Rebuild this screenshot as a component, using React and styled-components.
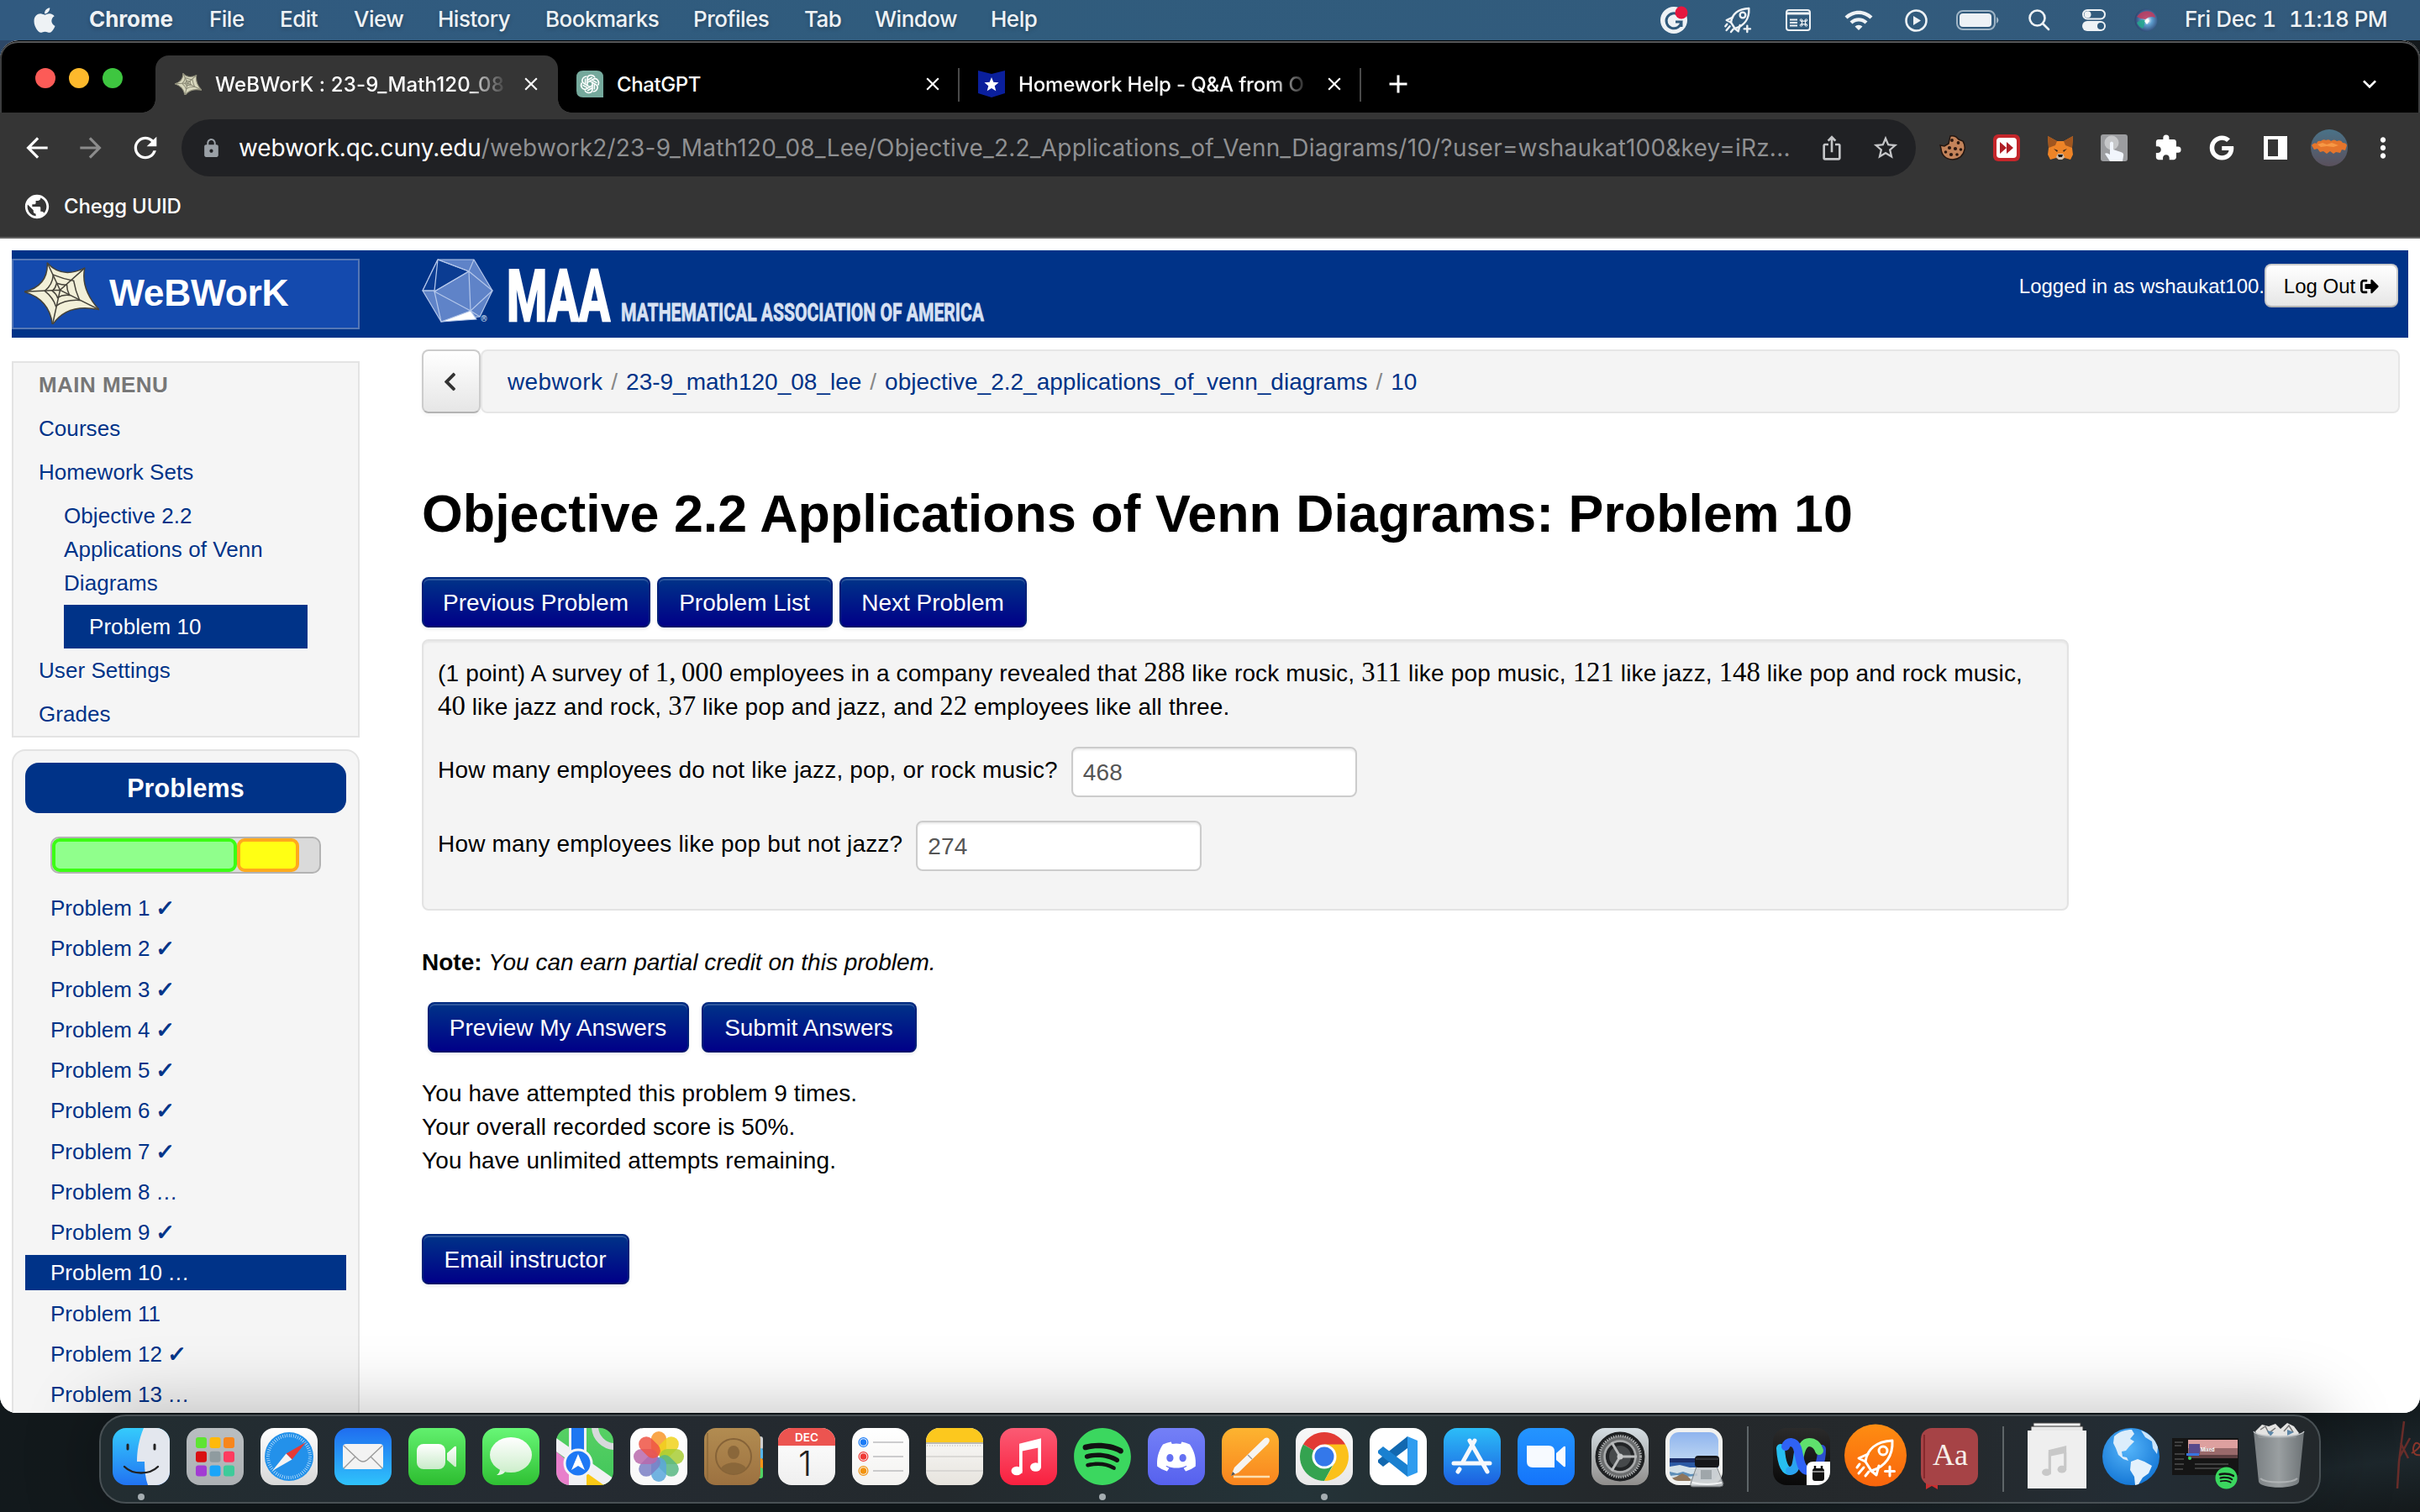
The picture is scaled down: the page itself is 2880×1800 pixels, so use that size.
import React from "react";
import styled, { createGlobalStyle } from "styled-components";
import { FaApple, FaSpotify, FaDiscord, FaGoogle, FaSignOutAlt, FaChevronLeft } from "react-icons/fa";
import {
  MdArrowBack,
  MdArrowForward,
  MdRefresh,
  MdClose,
  MdAdd,
  MdLock,
  MdIosShare,
  MdStarBorder,
  MdExtension,
  MdMoreVert,
  MdPublic,
  MdExpandMore,
  MdWifi
} from "react-icons/md";

const GlobalStyle = createGlobalStyle`
  * { box-sizing: border-box; }
  body { margin: 0; background: #14191c; }
`;

const ui = `Inter, "Noto Sans", sans-serif`;
const helv = `"Liberation Sans", Arial, sans-serif`;

/* ---------- desktop ---------- */

const Desktop = styled.div`
  width: 2880px;
  height: 1800px;
  overflow: hidden;
  display: flex;
  flex-direction: column;
  font-family: ${ui};
  background: linear-gradient(172deg, #2d4767 0, #2d4767 300px, #14191c 301px, #12191c 94%, #1d272c 97%, #14191b 100%);
`;

const MenuBar = styled.div`
  height: 48px;
  flex: none;
  display: flex;
  justify-content: space-between;
  padding: 0 40px 3px;
  background: linear-gradient(90deg, #315a80, #305c7d 40%, #335a7c);
  color: #eef2f5;
  font-size: 26px;
  text-shadow: 0 2px 5px rgba(0, 0, 0, 0.25);
`;

const MenuGroup = styled.div`
  display: flex;
  align-items: center;
`;

const MenuItem = styled.span`
  width: ${p => p.$w}px;
  flex: none;
  white-space: pre;
  font-weight: ${p => (p.$bold ? 700 : 500)};
  letter-spacing: ${p => (p.$ls === undefined ? -0.5 : p.$ls)}px;
  font-variant-numeric: ${p => (p.$tabular ? "tabular-nums" : "normal")};
`;

const MenuIcon = styled.span`
  width: ${p => p.$w}px;
  height: 40px;
  flex: none;
  display: flex;
  align-items: center;
  margin-top: 3px;
  svg { display: block; overflow: visible; }
`;

const AppleMenu = styled(MenuIcon)`
  svg { margin-left: -4px; }
`;

const BrowserWindow = styled.div`
  height: 1634px;
  flex: none;
  display: flex;
  flex-direction: column;
  border-radius: 22px 22px 20px 20px;
  overflow: hidden;
  background: #fff;
`;

/* ---------- chrome ---------- */

const TabStrip = styled.div`
  height: 86px;
  flex: none;
  display: flex;
  align-items: flex-end;
  background: #000;
  border-radius: 22px 22px 0 0;
  border-top: 1px solid #000;
  box-shadow: inset 0 2px 0 #56585a, inset 2px 0 0 #3c3d3e, inset -2px 0 0 #3c3d3e;
  padding: 0 2px;
  color: #fff;
`;

const Lights = styled.div`
  width: 183px;
  height: 68px;
  display: flex;
  gap: 16px;
  padding: 15px 0 0 40px;
`;

const Light = styled.i`
  width: 24px;
  height: 24px;
  border-radius: 50%;
  background: ${p => p.$c};
`;

const Tab = styled.div`
  position: relative;
  width: ${p => p.$w}px;
  height: 68px;
  display: flex;
  align-items: center;
  font-size: 24px;
  font-weight: 500;
  padding-left: ${p => p.$pl}px;
  border-radius: 16px 16px 0 0;
  background: ${p => (p.$active ? "#353535" : "transparent")};

  &::before,
  &::after {
    content: "";
    display: ${p => (p.$active ? "block" : "none")};
    position: absolute;
    bottom: 0;
    width: 16px;
    height: 16px;
  }
  &::before {
    left: -16px;
    background: radial-gradient(circle at 0 0, transparent 15.5px, #353535 16px);
  }
  &::after {
    right: -16px;
    background: radial-gradient(circle at 100% 0, transparent 15.5px, #353535 16px);
  }
  svg { flex: none; display: block; }
`;

const TabTitle = styled.span`
  width: 363px;
  margin-left: 16px;
  white-space: nowrap;
  letter-spacing: ${p => (p.$ls === undefined ? -0.4 : p.$ls)}px;
  mask-image: ${p => (p.$fade ? "linear-gradient(90deg, #000 82%, transparent 96%)" : "none")};
`;

const TabRule = styled.i`
  width: 2px;
  height: 40px;
  margin-bottom: 13px;
  background: #4a4a4a;
`;

const StripIcon = styled.span`
  height: 68px;
  display: flex;
  align-items: center;
  margin-left: ${p => p.$ml}px;
`;

const Toolbar = styled.div`
  height: 84px;
  flex: none;
  display: flex;
  align-items: center;
  padding-left: 25px;
  background: #353535;
  color: #fff;
`;

const NavIcon = styled.span`
  width: 64px;
  flex: none;
  display: flex;
  color: ${p => (p.$dim ? "#8b8b8b" : "#fff")};
`;

const Omnibox = styled.div`
  width: 2064px;
  height: 68px;
  flex: none;
  margin-left: -1px;
  border-radius: 34px;
  background: #202124;
  display: flex;
  align-items: center;
  padding: 0 20px 0 23px;
  color: #9aa0a6;
  svg { flex: none; }
`;

const Url = styled.div`
  flex: 1;
  margin-left: 20px;
  font-size: 28px;
  letter-spacing: 0.2px;
  white-space: nowrap;
  color: #8f9092;
  b {
    color: #fff;
    font-weight: 400;
    letter-spacing: -0.15px;
  }
`;

const OmniIcon = styled.span`
  width: 64px;
  display: flex;
  justify-content: center;
  color: #c4c5c7;
  &:last-child { margin-right: -16px; }
`;

const Extensions = styled.div`
  display: flex;
  margin-left: 12px;
`;

const ExtSlot = styled.span`
  width: 64px;
  height: 44px;
  display: flex;
  align-items: center;
  justify-content: center;
`;

const BookmarkBar = styled.div`
  height: 66px;
  flex: none;
  display: flex;
  align-items: center;
  gap: 15px;
  padding: 0 0 9px 27px;
  background: #353535;
  border-bottom: 2px solid #626262;
  color: #fff;
  font-size: 24px;
  font-weight: 500;
  letter-spacing: -0.2px;
`;

/* ---------- webwork page ---------- */

const Page = styled.div`
  flex: 1;
  min-height: 0;
  overflow: hidden;
  padding: 14px 14px 0;
  background: #fff;
  font-family: ${helv};
  font-size: 28px;
  line-height: 40px;
  color: #000;
`;

const Masthead = styled.div`
  height: 104px;
  display: flex;
  align-items: flex-start;
  background: #038;
  padding: 10px 12px 0 0;
`;

const Brand = styled.div`
  width: 414px;
  height: 84px;
  display: flex;
  align-items: center;
  gap: 12px;
  padding: 0 0 2px 13px;
  border: 2px solid #5577b5;
  background: #144aae;
  color: #fff;
  font-size: 44.5px;
  font-weight: 700;
  letter-spacing: -0.4px;
`;

const MaaLogo = styled.svg`
  width: 690px;
  height: 84px;
  margin-left: 74px;
  display: block;
  overflow: visible;
`;

const Login = styled.div`
  margin: 6px 0 0 auto;
  display: flex;
  align-items: center;
  color: #fff;
  font-size: 24px;
`;

const UserName = styled.span`
  padding-top: 2px;
`;

const LogOut = styled.span`
  width: 159px;
  height: 52px;
  display: flex;
  align-items: center;
  justify-content: center;
  gap: 6px;
  padding-top: 1px;
  border: 2px solid #bbb;
  border-color: #ccc #ccc #b3b3b3;
  border-radius: 8px;
  background: linear-gradient(#fff, #e6e6e6);
  color: #000;
`;

const Columns = styled.div`
  display: flex;
  align-items: flex-start;
`;

const Sidebar = styled.div`
  width: 414px;
  flex: none;
  margin: 28px 74px 0 0;
  font-size: 26px;
  letter-spacing: 0.08px;
  color: #038;
`;

const MenuPanel = styled.div`
  border: 2px solid #e3e3e3;
  background: #f5f5f5;
`;

const SideLink = styled.div`
  padding: 6px 30px;
  margin-left: ${p => (p.$sub ? 60 : 0)}px;
  margin-right: ${p => (p.$sub ? 60 : 0)}px;
  padding-left: ${p => (p.$sub && !p.$on ? 0 : 30)}px;
  padding-right: 0;
  color: ${p => (p.$on ? "#fff" : p.$head ? "#777" : "#038")};
  background: ${p => (p.$on ? "#038" : "none")};
  font-weight: ${p => (p.$head ? 700 : 400)};
  letter-spacing: ${p => (p.$head ? 0.45 : 0.06)}px;
  text-shadow: ${p => (p.$on ? "none" : "0 2px 0 rgba(255, 255, 255, 0.6)")};
`;

const ProblemPanel = styled.div`
  height: 900px;
  margin-top: 14px;
  padding: 14px;
  border: 2px solid #e3e3e3;
  border-radius: 16px;
  background: #f5f5f5;
`;

const PanelHead = styled.div`
  height: 60px;
  line-height: 61px;
  border-radius: 16px;
  background: #038;
  color: #fff;
  text-align: center;
  font-size: 30.5px;
  font-weight: 700;
`;

const Progress = styled.div`
  width: 322px;
  height: 44px;
  margin: 28px 0 20px 30px;
  display: flex;
  border: 2px solid #b3b3b3;
  border-radius: 10px;
  background: #dadada;
`;

const Segment = styled.i`
  width: ${p => p.$w}px;
  border: 4px solid ${p => p.$edge};
  border-radius: 9px;
  background: ${p => p.$fill};
`;

const ProblemLink = styled.div`
  height: 42px;
  line-height: 42px;
  margin-bottom: 6.25px;
  padding-left: 30px;
  letter-spacing: 0;
  color: ${p => (p.$on ? "#fff" : "#038")};
  background: ${p => (p.$on ? "#038" : "none")};
  display: flex;
  gap: 7px;
`;

const Mark = styled.span`
  display: inline-block;
  transform: skewX(-4deg);
  -webkit-text-stroke: ${p => (p.$check ? 1 : 0)}px currentColor;
`;

const Main = styled.div`
  flex: 1;
  padding: 14px 10px 0 0;
`;

const Crumbs = styled.div`
  height: 76px;
  display: flex;
`;

const BackButton = styled.span`
  width: 70px;
  display: flex;
  align-items: center;
  justify-content: center;
  padding-right: 3px;
  border: 2px solid #ccc;
  border-bottom-color: #b3b3b3;
  border-radius: 8px;
  background: linear-gradient(#fff, #e6e6e6);
  box-shadow: 0 2px 4px rgba(0, 0, 0, 0.05);
  color: #333;
`;

const CrumbTrail = styled.div`
  flex: 1;
  display: flex;
  align-items: center;
  gap: 10px;
  padding: 1px 0 0 30px;
  border: 2px solid #e6e6e6;
  border-radius: 8px;
  background: #f4f4f4;
  color: #038;
  letter-spacing: 0;
  i { color: #888; font-style: normal; }
  span:first-child { letter-spacing: 0.4px; }
`;

const Title = styled.h1`
  margin: 79px 0 36px;
  font-size: 62.75px;
  line-height: 80px;
  font-weight: 700;
`;

const ButtonRow = styled.div`
  display: flex;
  gap: ${p => p.$gap || 8}px;
  margin: ${p => p.$m || 0};
`;

const Button = styled.span`
  height: 60px;
  width: ${p => p.$w}px;
  display: flex;
  align-items: center;
  justify-content: center;
  padding: 1px 1px 0 0;
  border: 2px solid;
  border-color: #002a80 #002078 #00106a;
  border-radius: 8px;
  background: linear-gradient(#038, #008);
  box-shadow: inset 0 2px 0 rgba(255, 255, 255, 0.18), 0 2px 4px rgba(0, 0, 0, 0.08);
  color: #fff;
`;

const Well = styled.div`
  width: 1960px;
  height: 323px;
  margin-top: 14px;
  padding: 19px 18px;
  border: 2px solid #e3e3e3;
  border-radius: 8px;
  background: #f4f4f4;
  box-shadow: inset 0 2px 2px rgba(0, 0, 0, 0.05);
  white-space: nowrap;
`;

const Statement = styled.div`
  margin-left: -1px;
  letter-spacing: 0.16px;
`;

const Num = styled.span`
  font-family: "Liberation Serif", serif;
  font-size: 32.8px;
  line-height: 0;
  letter-spacing: 0;
`;

const Question = styled.div`
  height: 60px;
  margin: ${p => p.$mt}px 0 0 -1px;
  display: flex;
  gap: 16px;
  line-height: 55px;
  letter-spacing: 0.17px;
`;

const Answer = styled.div`
  width: 340px;
  height: 60px;
  line-height: 58px;
  padding-left: 12px;
  border: 2px solid #ccc;
  border-radius: 8px;
  background: #fff;
  box-shadow: inset 0 2px 2px rgba(0, 0, 0, 0.075);
  color: #555;
`;

const Para = styled.div`
  margin-top: ${p => p.$mt}px;
  letter-spacing: ${p => p.$ls || 0}px;
`;

/* ---------- dock ---------- */

const DockShelf = styled.div`
  height: 118px;
  flex: none;
  display: flex;
  align-items: flex-start;
  padding: 2px 0 0 118px;
`;

const Scribble = styled.svg`
  width: 36px;
  height: 90px;
  flex: none;
  margin: 6px 0 0 84px;
  opacity: 0.8;
`;

const Dock = styled.div`
  position: relative;
  width: 2644px;
  height: 106px;
  flex: none;
  padding: 14px 14px 0;
  display: flex;
  gap: 20px;
  border: 2px solid #485054;
  border-radius: 32px;
  background: linear-gradient(90deg, #222d31, #252b32 20%, #23292d 38%, #243338 54%, #24282b 68%, #25292c 82%, #232d35 92%, #23282b);
  box-shadow: 0 0 84px 6px rgba(0, 0, 0, 0.25);
`;

const DockSlot = styled.div`
  width: 68px;
  display: flex;
  flex-direction: column;
  align-items: center;
  svg { display: block; flex: none; overflow: visible; }
`;

const RunDot = styled.i`
  width: 8px;
  height: 8px;
  margin-top: 10px;
  border-radius: 50%;
  background: #a5adb1;
`;

const DockRule = styled.i`
  width: 2px;
  height: 78px;
  margin: -2px 9px 0;
  background: #5e6568;
`;

const Icon = ({ children }) => (
  <svg width="68" height="68" viewBox="0 0 68 68">{children}</svg>
);

const Grad = ({ id, a, b }) => (
  <linearGradient id={id} x1="0" y1="0" x2="0" y2="1">
    <stop offset="0" stopColor={a} />
    <stop offset="1" stopColor={b} />
  </linearGradient>
);

const Tile = ({ id, a, b, children }) => (
  <Icon>
    <defs>
      <Grad id={id} a={a} b={b} />
      <clipPath id={id + "Clip"}><rect width="68" height="68" rx="16" /></clipPath>
    </defs>
    <g clipPath={`url(#${id}Clip)`}>
      <rect width="68" height="68" fill={`url(#${id})`} />
      {children}
    </g>
  </Icon>
);

const Finder = () => (
  <Tile id="finder" a="#35cbfc" b="#2173f2">
    <path d="M37 0C31 14 29 28 29 40h9c0 10 1 20 4 28h26V0z" fill="#e3e7ee" />
    <path d="M18 20v5M50 20v5" stroke="#222" strokeWidth="3" strokeLinecap="round" />
    <path d="M14 46c10 10 30 10 40 0" stroke="#222" strokeWidth="2.4" fill="none" strokeLinecap="round" />
  </Tile>
);

const launchColors = ["#5ee432", "#ffb90a", "#f7861c", "#d90f12", "#8f9b9f", "#ff3b5f", "#a23bd3", "#1ba5f8", "#3ecb9a"];
const Launchpad = () => (
  <Tile id="launch" a="#b9bec1" b="#adb1b4">
    {launchColors.map((c, i) => (
      <rect key={c} x={11 + (i % 3) * 16.5} y={11 + Math.floor(i / 3) * 16.7} width="13" height="13" rx="3" fill={c} />
    ))}
  </Tile>
);

const Safari = () => (
  <Tile id="safari" a="#ffffff" b="#d8d8d8">
    <circle cx="34" cy="34" r="29" fill="#2391ea" />
    <circle cx="34" cy="34" r="25" fill="none" stroke="#cfe8fb" strokeWidth="4" strokeDasharray="0.7 1.9" />
    <path d="M54 17L37.500 37.500 30.500 30.500z" fill="#e53a35" />
    <path d="M14 51L30.500 30.500 37.500 37.500z" fill="#f4f4f4" />
  </Tile>
);

const Mail = () => (
  <Tile id="mail" a="#1f6df0" b="#2fc3fb">
    <rect x="10" y="19" width="48" height="30" rx="4" fill="#f3f3f3" />
    <path d="M11 21l18 17q5 4 10 0l18-17M11 48l14-14M57 48L43 34" stroke="#9a9a9a" strokeWidth="1.4" fill="none" />
  </Tile>
);

const FaceTime = () => (
  <Tile id="face" a="#62f06e" b="#2dbd30">
    <defs><Grad id="cam" a="#ffffff" b="#c9ebc9" /></defs>
    <rect x="10" y="19" width="34" height="30" rx="8" fill="url(#cam)" />
    <path d="M46 30l9-8q2-1 2 1v22q0 2-2 1l-9-8z" fill="url(#cam)" />
  </Tile>
);

const Messages = () => (
  <Tile id="msg" a="#68f777" b="#2fc033">
    <defs><Grad id="bubble" a="#ffffff" b="#cdeecb" /></defs>
    <path d="M21 48c0 4-1 6-4 8 6 0 9-2 11-5z" fill="#e4f5e4" />
    <ellipse cx="34" cy="32" rx="25" ry="21" fill="url(#bubble)" />
  </Tile>
);

const Maps = () => (
  <Tile id="maps" a="#57d064" b="#41c65a">
    <path d="M0 28l68 56H0z" fill="#e87fcb" />
    <path d="M30 44l40 30H30z" fill="#fbc916" />
    <path d="M0 12l68 48v16L0 28z" fill="#f1f1f4" />
    <path d="M15 0h21v68H15z" fill="#f1f1f4" />
    <path d="M18 0h15v36H18z" fill="#1d77f2" />
    <circle cx="70" cy="-2" r="24" fill="none" stroke="#d7d9dc" strokeWidth="8" />
    <circle cx="26" cy="42" r="16" fill="#1d78f5" stroke="#f4f4f6" strokeWidth="3" />
    <path d="M26 31l8 19-8-5-8 5z" fill="#fff" />
  </Tile>
);

const petals = ["#f8962a", "#f0d21c", "#a8cc35", "#58b782", "#5aa7dc", "#7a7fc4", "#b869ab", "#ee5444"];
const Photos = () => (
  <Tile id="photos" a="#ffffff" b="#f8f8f8">
    {petals.map((c, i) => (
      <rect key={c} x="25" y="4" width="18" height="29" rx="9" fill={c} opacity="0.85" transform={`rotate(${i * 45} 34 34)`} />
    ))}
  </Tile>
);

const Contacts = () => (
  <Icon>
    <rect x="58" y="10" width="12" height="16" rx="3" fill="#cfcfcf" />
    <rect x="58" y="24" width="12" height="14" rx="3" fill="#54b6f0" />
    <rect x="58" y="36" width="12" height="14" rx="3" fill="#fb9416" />
    <rect x="58" y="47" width="12" height="13" rx="3" fill="#4fd363" />
    <defs><Grad id="contacts" a="#b28c51" b="#9c7140" /></defs>
    <rect width="67" height="68" rx="14" fill="url(#contacts)" />
    <path d="M4 6v56" stroke="#8d6a3a" strokeWidth="1.5" />
    <circle cx="35" cy="34" r="21" fill="none" stroke="#866338" strokeWidth="2" />
    <ellipse cx="35" cy="29" rx="7" ry="8" fill="#8a673a" />
    <path d="M20 48c5-9 25-9 30 0-7 9-23 9-30 0z" fill="#8a673a" />
  </Icon>
);

const Calendar = () => (
  <Tile id="cal" a="#ffffff" b="#efefef">
    <path d="M0 0h68v21H0z" fill="#ec5450" />
    <text x="34" y="16" fill="#fff" fontSize="13.500" fontWeight="600" fontFamily={ui} textAnchor="middle">DEC</text>
    <text x="32" y="57" fill="#222" fontSize="41" fontWeight="300" fontFamily={ui} textAnchor="middle">1</text>
  </Tile>
);

const Reminders = () => (
  <Tile id="rem" a="#ffffff" b="#f3f2f0">
    {["#1a7bf6", "#ef3a36", "#f2930f"].map((c, i) => (
      <g key={c}>
        <circle cx="13.500" cy={17 + i * 17} r="5.400" fill="none" stroke={c} strokeWidth="1.2" />
        <circle cx="13.500" cy={17 + i * 17} r="3.800" fill={c} />
        <path d={`M25 ${17 + i * 17}h36`} stroke="#bdbdbf" strokeWidth="1.6" />
      </g>
    ))}
  </Tile>
);

const Notes = () => (
  <Tile id="notes" a="#fbfbfa" b="#e7e4de">
    <path d="M0 0h68v17H0z" fill="#fcc81e" />
    <path d="M0 18h68" stroke="#a9a69c" strokeWidth="1.4" />
    <path d="M1 21h66" stroke="#b5b2aa" strokeWidth="1.2" strokeDasharray="1.2 1.800" />
    <path d="M0 34h68M0 51h68" stroke="#d2d1ce" strokeWidth="1.4" />
  </Tile>
);

// beamed pair of eighth notes
const NoteShape = ({ fill }) => (
  <g fill={fill}>
    <path d="M23 19l26-8v40h-3.500V25L26.500 30v33H23z" transform="translate(0 3.500) scale(1 .8)" />
    <path d="M45.500 22h3.500v25h-3.500zM23 22h3.500v30H23z" />
    <ellipse cx="20" cy="51" rx="6.500" ry="5.200" />
    <ellipse cx="42.500" cy="46.500" rx="6.500" ry="5.200" />
  </g>
);

const Music = () => (
  <Tile id="music" a="#fb5b74" b="#f9203f">
    <NoteShape fill="#fff" />
  </Tile>
);

const Spotify = () => (
  <Icon>
    <circle cx="34" cy="34" r="32" fill="#121212" />
    <FaSpotify x="-1" y="-1" size={70} color="#3bd75f" />
  </Icon>
);

const Discord = () => (
  <Tile id="disc" a="#7480f7" b="#5661ee">
    <FaDiscord x="9" y="9" size={50} color="#fff" />
  </Tile>
);

const Pages = () => (
  <Tile id="pages" a="#fdb430" b="#f9841e">
    <path d="M11 57l4-10L49 14q4-4 7-1.500 2 2.500-1 6.500L20 53z" fill="#f6f4f1" />
    <path d="M11 57l2-5 3 3z" fill="#555" />
    <path d="M31 32l5 5" stroke="#9a9a9a" strokeWidth="1.4" />
    <path d="M14 58h43" stroke="#fde0b0" strokeWidth="2.4" />
  </Tile>
);

const Chrome = () => (
  <Tile id="chr" a="#f8f8f8" b="#e8e8e8">
    <path d="M34 34L8.900 19.500A29 29 0 0 1 59.100 19.500z" fill="#e23b34" />
    <path d="M34 34L8.900 19.500A29 29 0 0 0 34 63L46 41z" fill="#34a350" />
    <path d="M34 19.500H59.100A29 29 0 0 1 34 63L46.600 41z" fill="#fbc11a" />
    <circle cx="34" cy="34" r="14.500" fill="#fff" />
    <circle cx="34" cy="34" r="11.500" fill="#3478ea" />
  </Tile>
);

const VsCode = () => (
  <Tile id="vsc" a="#ffffff" b="#ffffff">
    <path d="M45 10L57 15v38l-12 5z" fill="#2f9cef" />
    <path d="M45 10v14L16 46l-6-5v-3z" fill="#1268b0" />
    <path d="M45 58V44L16 22l-6 5v3z" fill="#1a80d0" />
  </Tile>
);

const AppStore = () => (
  <Tile id="aps" a="#2cbdf8" b="#1c5fe0">
    <g stroke="#f5f8fc" strokeWidth="5" strokeLinecap="round">
      <path d="M37 15L22 42M31 15l21 37M12 42h43M19 49l-2 3" />
    </g>
  </Tile>
);

const Zoom = () => (
  <Tile id="zoom" a="#2495ff" b="#1474fb">
    <path d="M11 21h26q7 0 7 7v19H18q-7 0-7-7z" fill="#f7faff" />
    <path d="M46 30l9-8q2-1 2 1v22q0 2-2 1l-9-8z" fill="#f7faff" />
  </Tile>
);

const Settings = () => (
  <Tile id="set" a="#d5dee3" b="#8f8d8b">
    <circle cx="34" cy="34" r="27" fill="#6b6d6e" stroke="#1e2022" strokeWidth="5" />
    <circle cx="34" cy="34" r="24.500" fill="none" stroke="#aeb0b1" strokeWidth="3" strokeDasharray="1.4 1.4" />
    <circle cx="34" cy="34" r="15" fill="#46494b" stroke="#222426" strokeWidth="4" />
    <circle cx="34" cy="34" r="18.500" fill="none" stroke="#a9abac" strokeWidth="2.5" />
    <path d="M34 34h20M34 34L24 17M34 34L24 51" stroke="#b9bbbc" strokeWidth="3" />
    <circle cx="34" cy="34" r="3.500" fill="#c6c8c9" />
  </Tile>
);

const Preview = () => (
  <Icon>
    <rect width="68" height="68" rx="16" fill="#f1f1ef" />
    <defs>
      <Grad id="prevSky" a="#8fb4ee" b="#b9d3f2" />
      <clipPath id="prevClip"><rect x="5" y="5" width="58" height="58" rx="11" /></clipPath>
    </defs>
    <g clipPath="url(#prevClip)">
      <path d="M5 5h58v31H5z" fill="url(#prevSky)" />
      <path d="M5 36h58v6H5z" fill="#1c2f6b" />
      <path d="M5 41h58v6H5z" fill="#2c5aa4" />
      <path d="M5 46l12-2 16 4 14-3 16 4v16H5z" fill="#d3e1e9" />
      <path d="M5 52l9 2 7-2 9 3 8-1v3l-14 1-10-2-9 1z" fill="#5f8fb8" />
      <path d="M7 60l6-2 7-4 6 3 5 5-4 2H7z" fill="#8e765c" />
    </g>
    <path d="M37 46h24l8 20q0 4-4 4H33q-4 0-3-4z" fill="#c9cdd0" opacity="0.85" stroke="#6f7376" strokeWidth="1" />
    <path d="M42 50h13v11H42z" fill="#8d9499" opacity="0.7" />
    <path d="M32 65q17 4 35 0" stroke="#f2f4f5" strokeWidth="2" fill="none" />
    <rect x="35" y="33" width="29" height="14" rx="4" fill="#16171a" />
    <path d="M36 37h27" stroke="#3b3d40" strokeWidth="1.500" />
  </Icon>
);

const Webex = () => (
  <Tile id="webex" a="#2b2b2b" b="#090909">
    <g fill="none" strokeWidth="10" strokeLinecap="round">
      <path d="M58 25c0 16-5 26-11 26" stroke="#2d4fd0" />
      <path d="M31 38c2-14 6-21 12-21 6 0 10 4 12 10" stroke="#5fe06d" />
      <path d="M9 24c1 18 5 27 11 27" stroke="#27bff0" />
      <path d="M20 51c8 0 8-10 10-22" stroke="#2aa3f0" />
      <path d="M15 22c2-7 11-7 14 2 3 10 3 27 13 27" stroke="#2f62f5" />
    </g>
    <path d="M40 68V48q0-8 8-8h20v28z" fill="#fff" />
    <rect x="47" y="48" width="14" height="15" rx="3" fill="#111" />
    <path d="M50 45v4M58 45v4" stroke="#111" strokeWidth="2.500" />
    <path d="M47 52h14" stroke="#fff" strokeWidth="1.2" />
  </Tile>
);

const RocketShape = ({ stroke, width }) => (
  <g fill="none" stroke={stroke} strokeWidth={width} strokeLinejoin="round" strokeLinecap="round">
    <path d="M22 40c2-14 12-24 32-25 1 18-8 31-25 36z" />
    <circle cx="43" cy="27" r="5" />
    <path d="M25 31l-11 5 8 4M38 45l-3 11-6-5M20 47l-6 7M15 43l-3 4M26 52l-4 5" />
    <path d="M51 46v11M45.500 51.500h11" />
  </g>
);

const RocketApp = () => (
  <Icon>
    <defs><Grad id="rkt" a="#fe8d12" b="#f9650c" /></defs>
    <circle cx="34" cy="32.500" r="37" fill="url(#rkt)" />
    <RocketShape stroke="#fff" width="3" />
  </Icon>
);

const Dictionary = () => (
  <Icon>
    <path d="M6 60h14v13l-7-4-7 4z" fill="#c92f31" />
    <rect width="68" height="68" rx="13" fill="#a64346" />
    <path d="M4 8v52" stroke="#86292d" strokeWidth="2" />
    <text x="35" y="44" fill="#f6efe9" fontSize="36" fontFamily="Liberation Serif, serif" textAnchor="middle">Aa</text>
  </Icon>
);

const MusicDocs = () => (
  <Icon>
    <path d="M6-6h56v6H6z" fill="#f4f4f4" stroke="#444" strokeWidth="1" />
    <path d="M3-2h62v6H3z" fill="#e8e8e8" stroke="#333" strokeWidth="1" />
    <path d="M-1 3h70v69H-1z" fill="#efefef" />
    <g transform="translate(5 11) scale(.82)"><NoteShape fill="#c8c8c8" /></g>
  </Icon>
);

const Globe = () => (
  <Icon>
    <defs>
      <radialGradient id="globe" cx=".45" cy=".35" r=".65">
        <stop offset="0" stopColor="#55b5fa" />
        <stop offset="1" stopColor="#1678d6" />
      </radialGradient>
    </defs>
    <circle cx="34" cy="34" r="34" fill="url(#globe)" />
    <path d="M14 10c6-6 14-8 21-8l3 5-5 6 5 3-6 6-4 5-5 1 1 6 5 1 2 4-6-2-6-5-3-8-3-6z" fill="#dcedfb" />
    <path d="M34 40l8-3 8 3 9 5-4 9-7 5-5 8-4 1-1-10-5-8z" fill="#e4f1fc" />
    <path d="M46 3c9 3 17 10 20 20l-1 8-5-7-1-8-8-5z" fill="#cde5f9" />
  </Icon>
);

const SpotifyWindow = () => (
  <Icon>
    <rect x="-5" y="12" width="79" height="44" fill="#151515" />
    <path d="M14 14h59v18H14z" fill="#dda09f" />
    <path d="M14 24h59v12H14z" fill="#7c5355" opacity="0.7" />
    <rect x="15" y="19" width="13" height="12" fill="#584a8c" />
    <text x="29" y="28" fill="#fff" fontSize="5.500" fontWeight="700" fontFamily={ui}>Mixed</text>
    <path d="M-2 17h10M-2 21h8M-2 31h12M-2 37h11M-2 43h11M-2 49h10M22 43h40M22 48h38" stroke="#4d4d4d" strokeWidth="1.4" />
    <path d="M12 30h15v3H12z" fill="#3874e0" />
    <circle cx="16" cy="36" r="2" fill="#3bd75f" />
    <circle cx="59" cy="59" r="12.500" fill="#121212" />
    <FaSpotify x="46" y="46" size={27} color="#3bd75f" />
  </Icon>
);

const Trash = () => (
  <Icon>
    <defs>
      <linearGradient id="bin">
        <stop offset="0" stopColor="#7f8588" />
        <stop offset=".5" stopColor="#a3a8aa" />
        <stop offset="1" stopColor="#73797c" />
      </linearGradient>
    </defs>
    <path d="M6 4l8-8 8 2 8-3 6 6 8-7 8 4 6 8-4 6H10z" fill="#e4e4e2" />
    <path d="M12 2l6-4 4 8 8-6M40 4l6-7 5 8" stroke="#777" strokeWidth="1.500" fill="none" />
    <path d="M20 3l8 2-4 5zM44 2l8 3-8 4z" fill="#5d87a8" />
    <path d="M4 4c4 8 56 8 60 0l-6 60c-2 9-46 9-48 0z" fill="url(#bin)" opacity="0.93" />
    <path d="M4 4c4 8 56 8 60 0" fill="none" stroke="#c4c8ca" strokeWidth="1.500" />
    <path d="M12 60c6 6 38 6 44 0" stroke="#c4c8ca" strokeWidth="2" fill="none" opacity="0.6" />
  </Icon>
);

const dockApps = [
  [Finder, true], [Launchpad], [Safari], [Mail], [FaceTime], [Messages], [Maps], [Photos], [Contacts],
  [Calendar], [Reminders], [Notes], [Music], [Spotify, true], [Discord], [Pages], [Chrome, true],
  [VsCode], [AppStore], [Zoom], [Settings], [Preview], null, [Webex], [RocketApp], [Dictionary],
  null, [MusicDocs], [Globe], [SpotifyWindow], [Trash]
];

/* ---------- small drawings ---------- */

const WebStar = ({ size, fill = "#f2f0d8", line = "#45433a", w = 1.5 }) => (
  <svg width={size} height={size * 0.84} viewBox="0 0 88 74">
    <path d="M27 1Q44 20 71 7 66 32 88 56 50 48 33 74 30 44 0 35 28 28 27 1z" fill={fill} stroke={line} strokeWidth={w} strokeLinejoin="round" />
    <g fill="none" stroke={line} strokeWidth={w}>
      <path d="M27 1l15 32L71 7M42 33l46 23M42 33l-9 41M42 33L0 35" />
      <path d="M34 15Q46 20 58 22 60 34 65 45 48 44 37 52 34 42 24 34 33 27 34 15z" />
      <path d="M38 25Q44 27 50 27 50 33 53 39 45 38 39 42 38 38 33 34 37 30 38 25z" />
    </g>
  </svg>
);

const ChatGptIcon = () => (
  <svg width="32" height="32" viewBox="0 0 32 32">
    <path d="M8 0h16q8 0 8 8v24H8q-8 0-8-8V8q0-8 8-8z" fill="#75a99c" />
    <g fill="none" stroke="#fff" strokeWidth="1.6">
      {[0, 60, 120, 180, 240, 300].map(a => (
        <path key={a} d="M13 18.500V10q0-4.500 4.500-4.500 3 0 4.500 3M13 11.500l6-3.500" transform={`rotate(${a} 16 16)`} />
      ))}
    </g>
  </svg>
);

const StarBadge = () => (
  <svg width="32" height="32" viewBox="0 0 32 32">
    <path d="M0 0l16 4L32 0v27l-16 5-16-5z" fill="#0a1f9c" />
    <path d="M16 8l2.300 5.800 6.200.4-4.800 4 1.600 6.100L16 20.900l-5.300 3.400 1.600-6.100-4.800-4 6.200-.4z" fill="#fff" />
  </svg>
);

const GrammarlyMark = () => (
  <svg width="32" height="32" viewBox="0 0 32 32">
    <circle cx="16" cy="16" r="16" fill="#eef2f5" />
    <path d="M22 10a9 9 0 1 0 3 8h-7M25 18v6" stroke="#305a7c" strokeWidth="3" fill="none" />
    <circle cx="25" cy="7" r="7.500" fill="#e5173f" />
  </svg>
);

// small window with text lines and a command key glyph
const ShortcutsMark = () => (
  <svg width="30" height="26" viewBox="0 0 30 26" fill="none" stroke="#eef2f5" strokeWidth="2">
    <rect x="1" y="1" width="28" height="24" rx="3" />
    <path d="M1 5h28" strokeWidth="3" />
    <path d="M5 12.500h9M5 16h9M5 19.500h9" />
    <path d="M19.500 12.500v7M23.500 12.500v7M18 14.200h7M18 17.800h7" strokeWidth="1.200" />
    <g strokeWidth="1">
      <circle cx="18.500" cy="13" r="1.300" /><circle cx="24.500" cy="13" r="1.300" />
      <circle cx="18.500" cy="19" r="1.300" /><circle cx="24.500" cy="19" r="1.300" />
    </g>
  </svg>
);

const PlayMark = () => (
  <svg width="27" height="27" viewBox="0 0 27 27">
    <circle cx="13.500" cy="13.500" r="12" fill="none" stroke="#eef2f5" strokeWidth="2.600" />
    <path d="M10 8l9 5.500-9 5.500z" fill="#eef2f5" />
  </svg>
);

const Battery = () => (
  <svg width="52" height="24" viewBox="0 0 52 24">
    <rect x="1" y="1" width="45" height="22" rx="7" fill="none" stroke="#9fb5c6" strokeWidth="2" />
    <rect x="4" y="4" width="38" height="16" rx="4" fill="#eef2f5" />
    <path d="M48 8q5 4 0 8z" fill="#9fb5c6" />
  </svg>
);

const SearchMark = () => (
  <svg width="26" height="26" viewBox="0 0 26 26" fill="none" stroke="#eef2f5" strokeWidth="2.600" strokeLinecap="round">
    <circle cx="10.500" cy="10.500" r="9" />
    <path d="M17 17l7 7" />
  </svg>
);

const ControlCenter = () => (
  <svg width="28" height="26" viewBox="0 0 28 26">
    <rect x="1" y="1" width="26" height="10.500" rx="5.200" fill="none" stroke="#eef2f5" strokeWidth="2" />
    <circle cx="6.500" cy="6.200" r="4" fill="#eef2f5" />
    <rect y="14" width="28" height="12" rx="6" fill="#eef2f5" />
    <circle cx="22" cy="20" r="4" fill="#305a7c" />
  </svg>
);

const Siri = () => (
  <svg width="28" height="28" viewBox="0 0 28 28">
    <defs>
      <radialGradient id="siri" cx=".55" cy=".5" r=".6">
        <stop offset="0" stopColor="#fff" />
        <stop offset=".35" stopColor="#5f9fd0" />
        <stop offset="1" stopColor="#24345e" />
      </radialGradient>
    </defs>
    <circle cx="14" cy="14" r="13.500" fill="url(#siri)" />
    <path d="M3 10Q9 1 20 4q5 3 5 7-6-3-12 2-5 0-10-3z" fill="#c33a5c" opacity="0.85" />
    <path d="M3 17q5-5 10-3-1 7-3 10-5-2-7-7z" fill="#25a88c" opacity="0.85" />
    <path d="M16 12l2 3-3 4-3-4z" fill="#fff" />
  </svg>
);

const Cookie = () => (
  <svg width="32" height="32" viewBox="0 0 32 32">
    <path d="M13 2q3-1 7 1l3 3 5 2q3 5 2 10-2 11-14 12Q3 29 2 17l-1-4 5 1 5-3z" fill="#c3835a" stroke="#231610" strokeWidth="1.500" />
    <g fill="#2a1710">
      <circle cx="15" cy="7" r="1.900" /><circle cx="22.500" cy="10" r="1.900" /><circle cx="12" cy="16" r="2.100" />
      <circle cx="19" cy="17" r="2.100" /><circle cx="25.500" cy="18" r="1.800" /><circle cx="7.500" cy="21" r="1.800" />
      <circle cx="14" cy="24" r="2.100" /><circle cx="21" cy="24" r="1.800" />
    </g>
  </svg>
);

const FastForward = () => (
  <svg width="32" height="32" viewBox="0 0 32 32">
    <rect width="32" height="32" rx="6" fill="#c4262b" />
    <rect x="4" y="4" width="24" height="24" rx="4" fill="#fff" />
    <path d="M8 9l8 7-8 7zM16 9l8 7-8 7z" fill="#b01f26" />
  </svg>
);

const Fox = () => (
  <svg width="32" height="30" viewBox="0 0 32 30">
    <path d="M1 1l11 6h8l11-6-1 14 1 8-3 6-7-2-3 2h-4l-3-2-7 2-3-6 1-8z" fill="#ee8427" />
    <path d="M1 1l11 6-2 5-8 3zM31 1L20 7l2 5 8 3z" fill="#a1561f" />
    <path d="M11 26l2-4h6l2 4-3 3h-4z" fill="#cfc0b2" />
    <path d="M13 23h6l-1 3h-4z" fill="#1d1712" />
    <path d="M8 16l5 2-1 2zM24 16l-5 2 1 2z" fill="#3d2a1c" />
  </svg>
);

const HandTile = () => (
  <svg width="32" height="32" viewBox="0 0 32 32">
    <rect width="32" height="32" rx="3" fill="#9c9da0" />
    <circle cx="13" cy="10" r="8.500" fill="#c6c7c9" />
    <path d="M11 10q2-3 4 0v8l9 3q4 1 3 5l-1 6H11l-6-9q2-2 6 1z" fill="#f1f5fc" />
  </svg>
);

const SidePanel = () => (
  <svg width="28" height="28" viewBox="0 0 28 28">
    <path d="M0 0h28v28H0zM5 4v20h12V4z" fill="#fff" fillRule="evenodd" />
  </svg>
);

const Avatar = () => (
  <svg width="44" height="44" viewBox="0 0 44 44">
    <defs>
      <Grad id="sky" a="#4a7288" b="#5a505c" />
      <clipPath id="round"><circle cx="22" cy="22" r="22" /></clipPath>
    </defs>
    <g clipPath="url(#round)">
      <path d="M0 0h44v44H0z" fill="url(#sky)" />
      <path d="M1 19q3-4 6-2 1-4 5-3 3-3 6-1 4-2 6 1 4-3 7 0 5-2 7 2 4 0 5 3l-2 6-4-1-2 4-5-1-3 2-4-3-4 3-4-3-4 1-3-4-4 1z" fill="#e5752c" />
      <path d="M8 18l6-2 5 2 6-2 8 3-6 2-8-1-7 1z" fill="#f79845" />
    </g>
  </svg>
);

const Icosahedron = () => (
  <g stroke="#b4c7ea" strokeWidth="1.200" strokeLinejoin="round">
    <path d="M19 1h43l22 37-15 31-46 6L1 38z" fill="#5f83c8" />
    <path d="M19 1l37 14L15 39zM19 1L1 38h14z" fill="#0b3c92" />
    <path d="M19 1l37 14 6-14M56 15L15 39l8 36M56 15l2 47-43-23M56 15l28 23-26 24M1 38h14M58 62l11 7" fill="none" />
    <path d="M23 75l35-13 7 10z" fill="#fff" />
  </g>
);

const menus = [
  ["File", 84], ["Edit", 88], ["View", 100], ["History", 128], ["Bookmarks", 176],
  ["Profiles", 132], ["Tab", 84], ["Window", 138], ["Help", 80]
];

const problems = ["✓", "✓", "✓", "✓", "✓", "✓", "✓", "…", "✓", "…", "", "✓", "…"];

const App = () => (
  <Desktop>
    <GlobalStyle />
    <MenuBar>
      <MenuGroup>
        <AppleMenu $w={66}><FaApple size={34} /></AppleMenu>
        <MenuItem $w={143} $bold $ls={-0.1}>Chrome</MenuItem>
        {menus.map(([name, w]) => (
          <MenuItem key={name} $w={w}>{name}</MenuItem>
        ))}
      </MenuGroup>
      <MenuGroup>
        <MenuIcon $w={76}><GrammarlyMark /></MenuIcon>
        <MenuIcon $w={73}>
          <svg width="32" height="32" viewBox="10 12 48 48"><RocketShape stroke="#eef2f5" width="3.600" /></svg>
        </MenuIcon>
        <MenuIcon $w={69}><ShortcutsMark /></MenuIcon>
        <MenuIcon $w={73}><MdWifi size={36} /></MenuIcon>
        <MenuIcon $w={61}><PlayMark /></MenuIcon>
        <MenuIcon $w={86}><Battery /></MenuIcon>
        <MenuIcon $w={64}><SearchMark /></MenuIcon>
        <MenuIcon $w={62}><ControlCenter /></MenuIcon>
        <MenuIcon $w={60}><Siri /></MenuIcon>
        <MenuItem $w={124} $ls={-0.3} $tabular>Fri Dec 1</MenuItem>
        <MenuItem $w={116} $ls={-0.6} $tabular>11:18 PM</MenuItem>
      </MenuGroup>
    </MenuBar>

    <BrowserWindow>
      <TabStrip>
        <Lights>
          <Light $c="#fc5b57" />
          <Light $c="#fdb92c" />
          <Light $c="#3ec640" />
        </Lights>
        <Tab $active $w={479} $pl={23}>
          <WebStar size={32} fill="#d9d8be" line="#8d8c78" w={3} />
          <TabTitle $fade $ls={0.15}>WeBWorK : 23-9_Math120_08</TabTitle>
          <MdClose size={26} />
        </Tab>
        <Tab $w={476} $pl={22}>
          <ChatGptIcon />
          <TabTitle>ChatGPT</TabTitle>
          <MdClose size={26} />
        </Tab>
        <TabRule />
        <Tab $w={476} $pl={22}>
          <StarBadge />
          <TabTitle $fade $ls={-0.15}>Homework Help - Q&amp;A from O</TabTitle>
          <MdClose size={26} />
        </Tab>
        <TabRule />
        <StripIcon $ml={26}><MdAdd size={36} /></StripIcon>
        <StripIcon $ml={1122}><MdExpandMore size={32} /></StripIcon>
      </TabStrip>
      <Toolbar>
        <NavIcon><MdArrowBack size={38} /></NavIcon>
        <NavIcon $dim><MdArrowForward size={38} /></NavIcon>
        <NavIcon><MdRefresh size={40} /></NavIcon>
        <Omnibox>
          <MdLock size={25} />
          <Url>
            <b>webwork.qc.cuny.edu</b>/webwork2/23-9_Math120_08_Lee/Objective_2.2_Applications_of_Venn_Diagrams/10/?user=wshaukat100&amp;key=iRz...
          </Url>
          <OmniIcon><MdIosShare size={32} /></OmniIcon>
          <OmniIcon><MdStarBorder size={34} /></OmniIcon>
        </Omnibox>
        <Extensions>
          <ExtSlot><Cookie /></ExtSlot>
          <ExtSlot><FastForward /></ExtSlot>
          <ExtSlot><Fox /></ExtSlot>
          <ExtSlot><HandTile /></ExtSlot>
          <ExtSlot><MdExtension size={34} /></ExtSlot>
          <ExtSlot><FaGoogle size={30} /></ExtSlot>
          <ExtSlot><SidePanel /></ExtSlot>
          <ExtSlot><Avatar /></ExtSlot>
          <ExtSlot><MdMoreVert size={38} /></ExtSlot>
        </Extensions>
      </Toolbar>
      <BookmarkBar>
        <MdPublic size={34} />
        Chegg UUID
      </BookmarkBar>

      <Page>
        <Masthead>
          <Brand>
            <WebStar size={89} />
            WeBWorK
          </Brand>
          <MaaLogo viewBox="0 0 690 84">
            <Icosahedron />
            <g fill="#fff" fontFamily="Roboto, sans-serif" fontWeight="700">
              <text
                x="101" y="74" fontSize="85" stroke="#fff" strokeWidth="2.500"
                textLength="123" lengthAdjust="spacingAndGlyphs"
              >
                MAA
              </text>
              <text
                x="237" y="74" fontSize="29" fill="#d7e1f3" stroke="#d7e1f3" strokeWidth="0.8"
                textLength="432" lengthAdjust="spacingAndGlyphs"
              >
                MATHEMATICAL ASSOCIATION OF AMERICA
              </text>
              <text x="70" y="75" fontSize="10" fill="#d7e1f3">®</text>
            </g>
          </MaaLogo>
          <Login>
            <UserName>Logged in as wshaukat100.</UserName>
            <LogOut>Log Out <FaSignOutAlt size={22} /></LogOut>
          </Login>
        </Masthead>

        <Columns>
          <Sidebar>
            <MenuPanel>
              <SideLink $head>MAIN MENU</SideLink>
              <SideLink>Courses</SideLink>
              <SideLink>Homework Sets</SideLink>
              <SideLink $sub>Objective 2.2 Applications of Venn Diagrams</SideLink>
              <SideLink $sub $on>Problem 10</SideLink>
              <SideLink>User Settings</SideLink>
              <SideLink>Grades</SideLink>
            </MenuPanel>
            <ProblemPanel>
              <PanelHead>Problems</PanelHead>
              <Progress>
                <Segment $w={220} $edge="#3bfd14" $fill="#90ff8c" />
                <Segment $w={74} $edge="#ffa91c" $fill="#ffff14" />
              </Progress>
              {problems.map((mark, i) => (
                <ProblemLink key={i} $on={i === 9}>
                  <span>Problem {i + 1}</span>
                  <Mark $check={mark === "✓"}>{mark}</Mark>
                </ProblemLink>
              ))}
            </ProblemPanel>
          </Sidebar>

          <Main>
            <Crumbs>
              <BackButton><FaChevronLeft size={25} /></BackButton>
              <CrumbTrail>
                <span>webwork</span><i>/</i>
                <span>23-9_math120_08_lee</span><i>/</i>
                <span>objective_2.2_applications_of_venn_diagrams</span><i>/</i>
                <span>10</span>
              </CrumbTrail>
            </Crumbs>
            <Title>Objective 2.2 Applications of Venn Diagrams: Problem 10</Title>
            <ButtonRow>
              <Button $w={272}>Previous Problem</Button>
              <Button $w={209}>Problem List</Button>
              <Button $w={223}>Next Problem</Button>
            </ButtonRow>
            <Well>
              <Statement>
                (1 point) A survey of <Num>1,&#8201;000</Num> employees in a company revealed that <Num>288</Num> like
                rock music, <Num>311</Num> like pop music, <Num>121</Num> like jazz, <Num>148</Num> like pop and rock
                music,
                <br />
                <Num>40</Num> like jazz and rock, <Num>37</Num> like pop and jazz, and <Num>22</Num> employees like all
                three.
              </Statement>
              <Question $mt={27}>
                How many employees do not like jazz, pop, or rock music?
                <Answer>468</Answer>
              </Question>
              <Question $mt={28}>
                How many employees like pop but not jazz?
                <Answer>274</Answer>
              </Question>
            </Well>
            <Para $mt={42}>
              <b>Note:</b> <i>You can earn partial credit on this problem.</i>
            </Para>
            <ButtonRow $gap={15} $m="27px 0 0 7px">
              <Button $w={311}>Preview My Answers</Button>
              <Button $w={256}>Submit Answers</Button>
            </ButtonRow>
            <Para $mt={29} $ls={0.1}>
              You have attempted this problem 9 times.
              <br />
              Your overall recorded score is 50%.
              <br />
              You have unlimited attempts remaining.
            </Para>
            <ButtonRow $m="67px 0 0">
              <Button $w={247}>Email instructor</Button>
            </ButtonRow>
          </Main>
        </Columns>
      </Page>
    </BrowserWindow>

    <DockShelf>
      <Dock>
        {dockApps.map((entry, i) => {
          if (!entry) return <DockRule key={i} />;
          const [Glyph, running] = entry;
          return (
            <DockSlot key={i}>
              <Glyph />
              {running && <RunDot />}
            </DockSlot>
          );
        })}
      </Dock>
      {/* red neon strokes of the wallpaper */}
      <Scribble viewBox="0 0 36 90">
        <path d="M15 2L9 50 7 82M11 28l9 18M22 22L10 44" fill="none" stroke="#7c2f2a" strokeWidth="2.500" />
        <path d="M24 40q10-6 10-10-6-6-8 4-1 10 10 8" fill="none" stroke="#a33a2c" strokeWidth="2" />
      </Scribble>
    </DockShelf>
  </Desktop>
);

export default App;
